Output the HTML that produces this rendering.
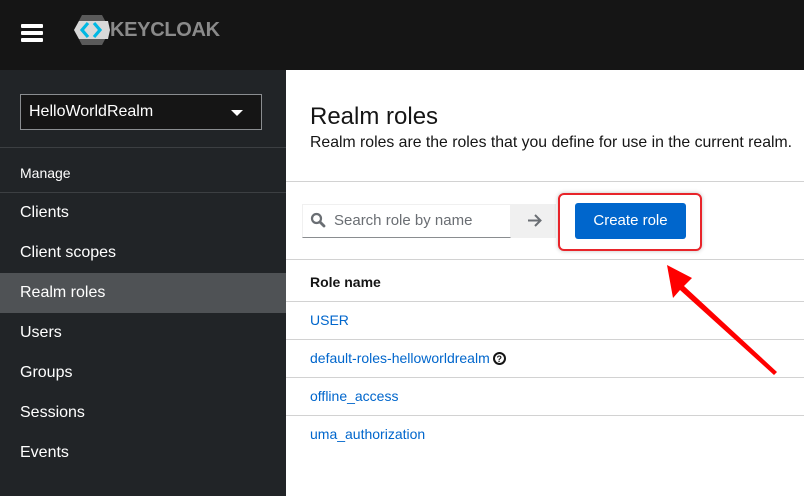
<!DOCTYPE html>
<html><head><style>
*{margin:0;padding:0;box-sizing:border-box}
body{width:804px;height:496px;overflow:hidden;font-family:"Liberation Sans",sans-serif;background:#fff;position:relative}
.hdr{position:absolute;left:0;top:0;width:804px;height:70px;background:#151515}
.side{position:absolute;left:0;top:70px;width:286px;height:426px;background:#212427;color:#fff}
.sel{position:absolute;left:20px;top:24px;width:242px;height:36px;background:#151515;border:1px solid #8a8d90;font-size:16px;padding:8px 8px;color:#fff}
.sel:after{content:"";position:absolute;right:18px;top:15px;border-left:6px solid transparent;border-right:6px solid transparent;border-top:6px solid #fff}
.sep{position:absolute;left:0;width:286px;height:1px;background:#3c3f42}
.it{position:absolute;left:0;width:286px;height:40px;line-height:40px;padding-left:20px;font-size:16px}
.main{position:absolute;left:286px;top:70px;width:518px;height:426px}
.l{position:absolute;left:0;width:518px;height:1px;background:#d2d2d2}
.lnk{position:absolute;left:24px;font-size:14px;color:#06c}
.bar{position:absolute;left:21px;width:22px;height:4px;background:#fff;border-radius:1px}
</style></head><body>
<div class="hdr">
 <div class="bar" style="top:24px"></div>
 <div class="bar" style="top:31px"></div>
 <div class="bar" style="top:38px"></div>
 <svg style="position:absolute;left:72px;top:14px" width="40" height="32" viewBox="0 0 40 32">
  <polygon points="10,1 30,1 38,16 30,31 10,31 2,16" fill="#5a5a5a"/>
  <polygon points="2,16 7,7 36,7 38,16 36,25 7,25" fill="#d8d8d8"/>
  <polyline points="16,9 10,16 16,23" fill="none" stroke="#00b8e3" stroke-width="3.2"/>
  <polyline points="22,9 28,16 22,23" fill="none" stroke="#00b8e3" stroke-width="3.2"/>
 </svg>
 <div style="position:absolute;left:110px;top:19px;font-size:20px;font-weight:bold;color:#8a8a8a;letter-spacing:-0.3px">KEYCLOAK</div>
</div>
<div class="side">
 <div class="sel">HelloWorldRealm</div>
 <div class="sep" style="top:77px"></div>
 <div class="it" style="top:83px;font-size:14px">Manage</div>
 <div class="sep" style="top:122px"></div>
 <div class="it" style="top:123px">Clients</div>
 <div class="it" style="top:163px">Client scopes</div>
 <div class="it" style="top:203px;background:#4f5255">Realm roles</div>
 <div class="it" style="top:243px">Users</div>
 <div class="it" style="top:283px">Groups</div>
 <div class="it" style="top:323px">Sessions</div>
 <div class="it" style="top:363px">Events</div>
</div>
<div class="main">
 <div style="position:absolute;left:24px;top:33px;font-size:24px;color:#151515">Realm roles</div>
 <div style="position:absolute;left:24px;top:64px;font-size:15.8px;color:#151515;white-space:nowrap">Realm roles are the roles that you define for use in the current realm.</div>
 <div class="l" style="top:111px"></div>
 <div style="position:absolute;left:16px;top:134px;width:209px;height:34px;border:1px solid #f0f0f0;border-bottom:1px solid #8a8d90"></div>
 <svg style="position:absolute;left:24px;top:142px" width="16" height="16" viewBox="0 0 16 16"><circle cx="6.5" cy="6.5" r="4.5" fill="none" stroke="#6a6e73" stroke-width="2.2"/><line x1="10" y1="10" x2="14" y2="14" stroke="#6a6e73" stroke-width="2.8" stroke-linecap="round"/></svg>
 <div style="position:absolute;left:48px;top:142px;font-size:15px;color:#6a6e73">Search role by name</div>
 <div style="position:absolute;left:225px;top:134px;width:45px;height:34px;background:#f0f0f0"></div>
 <svg style="position:absolute;left:241px;top:143px" width="15" height="15" viewBox="0 0 15 15"><line x1="1" y1="7.5" x2="13" y2="7.5" stroke="#6a6e73" stroke-width="2"/><polyline points="8,2 13.5,7.5 8,13" fill="none" stroke="#6a6e73" stroke-width="2"/></svg>
 <div style="position:absolute;left:289px;top:133px;width:111px;height:36px;background:#06c;border-radius:3px;color:#fff;font-size:15px;text-align:center;line-height:36px">Create role</div>
 <div style="position:absolute;left:272px;top:123px;width:144px;height:58px;border:2px solid #e8242a;border-radius:6px;box-shadow:0 0 4px rgba(0,0,0,.25)"></div>
 <div class="l" style="top:189px"></div>
 <div style="position:absolute;left:24px;top:204px;font-size:14px;font-weight:bold;color:#151515">Role name</div>
 <div class="l" style="top:231px"></div>
 <div class="lnk" style="top:242px">USER</div>
 <div class="l" style="top:269px"></div>
 <div class="lnk" style="top:280px">default-roles-helloworldrealm<span style="display:inline-block;width:13px;height:13px;border:2px solid #151515;border-radius:50%;font-size:9px;font-weight:bold;color:#151515;text-align:center;line-height:10px;margin-left:3px;vertical-align:1px">?</span></div>
 <div class="l" style="top:307px"></div>
 <div class="lnk" style="top:318px">offline_access</div>
 <div class="l" style="top:345px"></div>
 <div class="lnk" style="top:356px">uma_authorization</div>
 <svg style="position:absolute;left:0;top:0" width="518" height="426"><polygon points="381,195 387,228 394,220 488,305 491,302 398,216 406,208" fill="#f00"/></svg>
</div>
</body></html>
